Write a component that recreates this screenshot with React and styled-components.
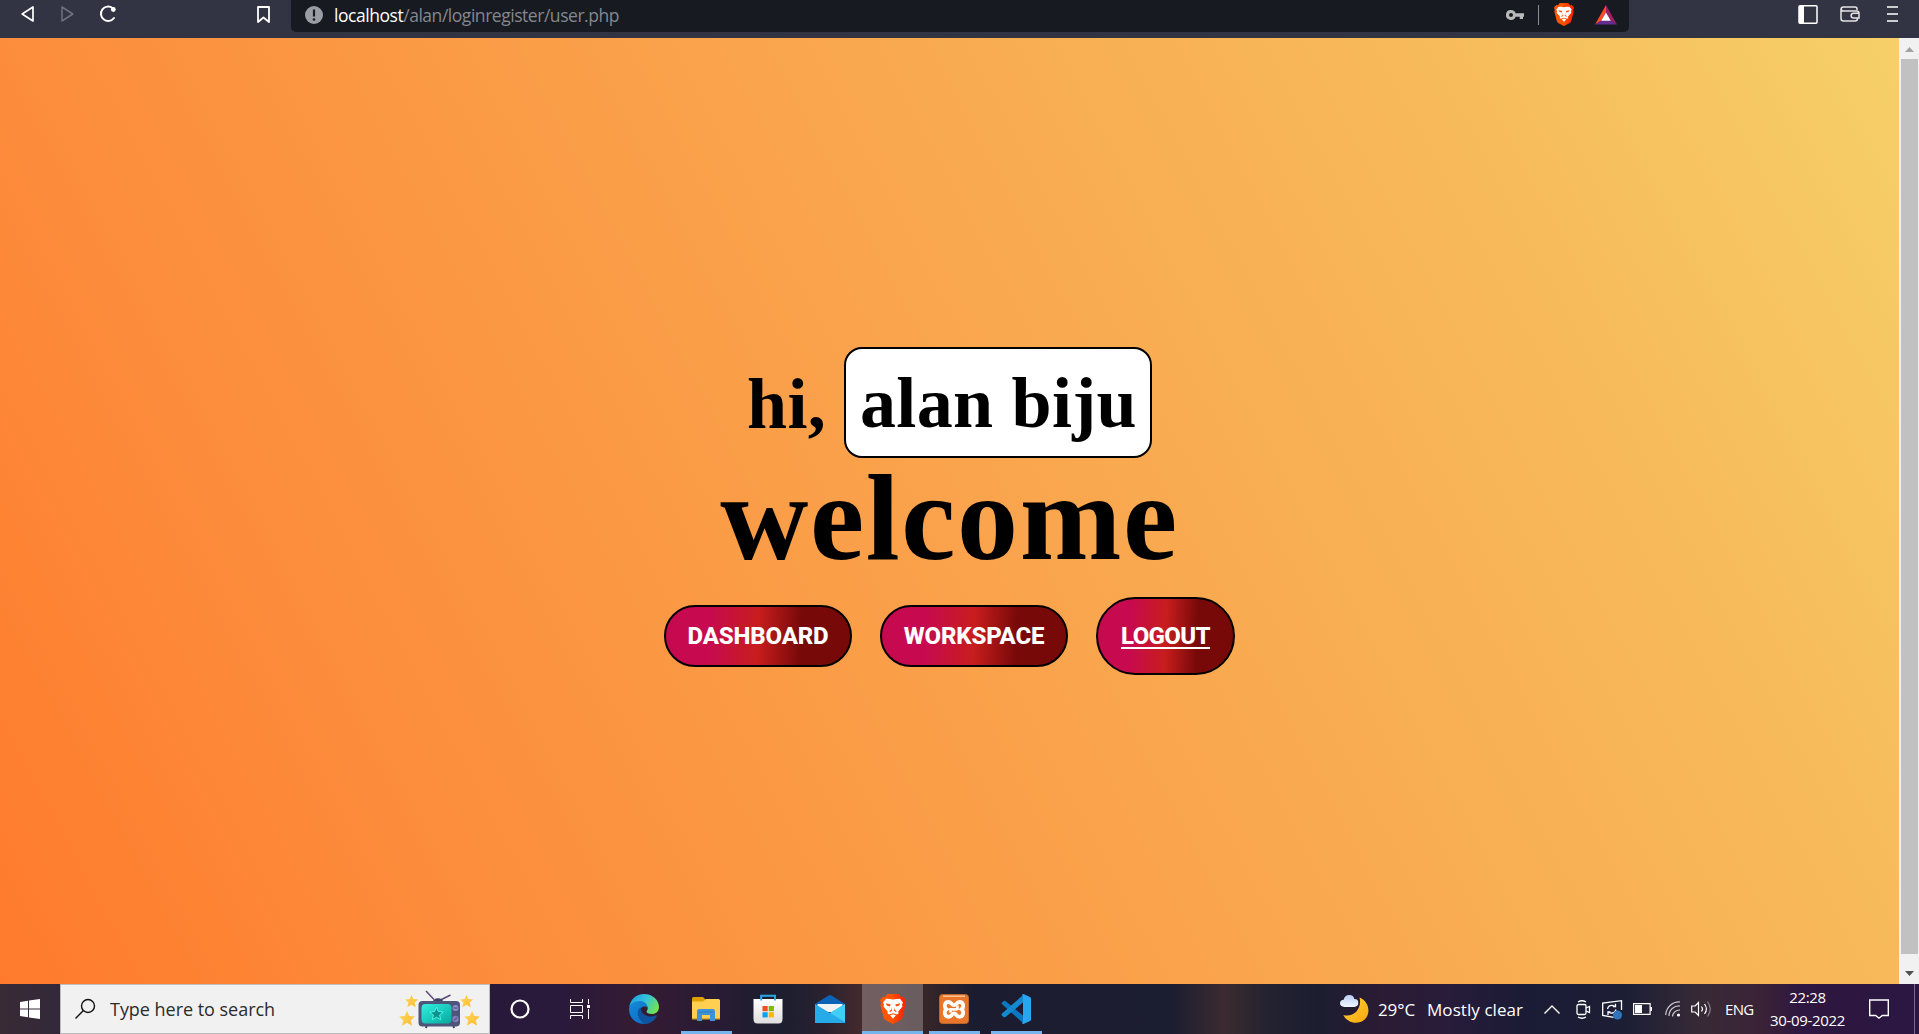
import React from "react";
import styled, { createGlobalStyle, css } from "styled-components";

const Global = createGlobalStyle`
  *, *::before, *::after { box-sizing: border-box; }
  html, body { margin: 0; padding: 0; overflow: hidden; }
  svg { display: block; flex: none; overflow: visible; }
`;

const ui = css`font-family: "Open Sans", "Noto Sans", sans-serif;`;

const Screen = styled.div`
  width: 1919px;
  height: 1034px;
  display: flex;
  flex-direction: column;
  overflow: hidden;
`;

/* ---------- browser toolbar ---------- */
const Toolbar = styled.header`
  ${ui}
  height: 38px;
  flex: none;
  display: flex;
  align-items: flex-start;
  background: #323443;
`;
const NavGroup = styled.nav`
  width: 291px;
  height: 28px;
  display: flex;
  align-items: center;
  padding-left: 21px;
`;
const NavIcon = styled.span`
  display: flex;
  margin-right: ${(p) => p.$gap || 0}px;
`;
const AddressBar = styled.div`
  width: 1338px;
  height: 32px;
  display: flex;
  align-items: center;
  padding: 0 12px 3px 14px;
  background: #171a21;
  border-radius: 0 0 5px 5px;
`;
const Url = styled.span`
  margin-left: 11px;
  font-size: 17.5px;
  line-height: 24px;
  letter-spacing: -0.46px;
  color: #85878d;
  white-space: nowrap;
`;
const Host = styled.span`color: #fff;`;
const AddressActions = styled.div`
  margin-left: auto;
  display: flex;
  align-items: center;
`;
const Separator = styled.span`
  width: 1px;
  height: 20px;
  margin: 0 15px 0 14px;
  background: #8b8c91;
`;
const ToolGroup = styled.div`
  height: 28px;
  margin-left: auto;
  padding-right: 21px;
  display: flex;
  align-items: center;
`;

/* ---------- page ---------- */
const Viewport = styled.div`
  flex: 1;
  min-height: 0;
  display: flex;
`;
const Page = styled.main`
  flex: 1;
  display: flex;
  flex-direction: column;
  align-items: center;
  padding-top: 309px;
  background: linear-gradient(62deg, #ff7a2c 0%, #fc8d3c 21%, #faa34c 50%, #f7bb5b 81%, #f6d069 100%);
  font-family: "Liberation Serif", serif;
  font-weight: 700;
  color: #000;
`;
const Greeting = styled.h3`
  margin: 0;
  display: flex;
  align-items: center;
  font-size: 72px;
  line-height: 83px;
  letter-spacing: 0.3px;
  white-space: pre;
`;
const Lead = styled.span`padding-top: 3px;`;
const Name = styled.span`
  margin-left: 18px;
  padding: 13px 13px 11px 14px;
  background: #fff;
  border: 2px solid #000;
  border-radius: 18px;
`;
const Welcome = styled.h1`
  margin: -9px 0 0;
  font-size: 122px;
  line-height: 138px;
  letter-spacing: 1.6px;
`;
const Actions = styled.div`
  margin-top: 10px;
  display: flex;
  align-items: center;
  gap: 28px;
`;
const PillButton = styled.a`
  width: ${(p) => p.$w}px;
  height: ${(p) => p.$h}px;
  display: flex;
  align-items: center;
  justify-content: center;
  border: 2px solid #000;
  border-radius: ${(p) => p.$h / 2}px;
  background: linear-gradient(92deg, #c70a4f 24%, #c81d1d 50%, #780909 73%);
  color: #fff;
  font-family: Roboto, "Liberation Sans", sans-serif;
  font-weight: 800;
  font-size: 24px;
  letter-spacing: ${(p) => (p.$underline ? -0.6 : -0.15)}px;
  text-decoration: ${(p) => (p.$underline ? "underline" : "none")};
  text-decoration-thickness: 2px;
  text-underline-offset: 3px;
`;
const Scrollbar = styled.aside`
  width: 20px;
  display: flex;
  flex-direction: column;
  align-items: center;
  background: #f1f1f1;
`;
const ScrollArrow = styled.span`
  height: ${(p) => p.$h}px;
  padding-top: ${(p) => p.$drop}px;
  display: flex;
  align-items: center;
`;
const Thumb = styled.div`
  width: 17px;
  height: 895px;
  flex: none;
  background: #c1c1c1;
`;

/* ---------- taskbar ---------- */
const Taskbar = styled.footer`
  ${ui}
  height: 50px;
  flex: none;
  display: flex;
  color: #fff;
  background: linear-gradient(90deg,
    #382b35 0, #33283a 60px, #28193a 490px, #29193a 560px, #351b33 640px, #291b34 710px,
    #1d1e2f 780px, #252030 815px, #432a2d 860px, #372629 925px, #1b1c30 975px, #1b1d31 1170px,
    #3b2b30 1225px, #222230 1270px, #1c1d30 1320px, #2c1b34 1385px, #271c3a 1450px,
    #1a1b35 1530px, #1d1f35 1630px, #372a36 1700px, #3b2337 1760px, #2e1740 1800px, #2b1742 1919px);
`;
const StartButton = styled.div`
  width: 60px;
  display: grid;
  place-items: center;
`;
const SearchBox = styled.div`
  width: 430px;
  display: flex;
  align-items: center;
  padding: 0 8px 0 14px;
  background: #f1f1f1;
  border: 1px solid #bdbdbd;
  color: #2b2b2b;
`;
const SearchLabel = styled.span`
  margin-left: 15px;
  font-size: 18px;
  letter-spacing: -0.03px;
  white-space: nowrap;
`;
const Art = styled.span`
  margin-left: auto;
  display: flex;
`;
const ShellButton = styled.div`
  width: 60px;
  margin-right: ${(p) => p.$after || 0}px;
  display: grid;
  place-items: center;
`;
const TaskButton = styled.div`
  width: ${(p) => (p.$active ? 61 : 62)}px;
  margin-left: ${(p) => (p.$active ? 1 : 0)}px;
  display: flex;
  flex-direction: column;
  align-items: center;
  justify-content: center;
  position: relative;
  background: ${(p) => (p.$active ? "rgba(255,255,255,.25)" : "none")};
  &::after {
    content: "";
    display: ${(p) => (p.$open || p.$active ? "block" : "none")};
    position: absolute;
    bottom: 0;
    left: ${(p) => (p.$active ? 0 : 6)}px;
    right: ${(p) => (p.$active ? 0 : 5)}px;
    height: 3px;
    background: #76b4ee;
  }
`;
const Tray = styled.div`
  margin-left: auto;
  display: flex;
  align-items: center;
`;
const TrayItem = styled.span`
  width: ${(p) => p.$w}px;
  display: flex;
  align-items: center;
  white-space: nowrap;
  font-size: ${(p) => p.$size || 17}px;
  letter-spacing: ${(p) => p.$track || 0}px;
`;
const Clock = styled.div`
  width: 99px;
  display: flex;
  flex-direction: column;
  align-items: center;
  padding-right: 24px;
  font-size: 15px;
  line-height: 23px;
  letter-spacing: -0.35px;
  white-space: nowrap;
`;
const DesktopEdge = styled.span`
  width: 5px;
  height: 50px;
  border-left: 1px solid #76698a;
`;

/* ---------- drawings ---------- */
const BraveIcon = ({ w, h }) => (
  <svg width={w} height={h} viewBox="0 0 26 30" preserveAspectRatio="none">
    <defs>
      <linearGradient id="brv" x1="0" x2="1"><stop offset=".4" stopColor="#ff5500" /><stop offset="1" stopColor="#ff2000" /></linearGradient>
    </defs>
    <path d="M7.5 0h11l2.500 3 2.200-.3L26 6l-1 3 .6 2-3.400 13.200-1.600 1.800L13 30l-7.600-4-1.600-1.800L.4 11 1 9 0 6l2.800-3.300L5 3z" fill="url(#brv)" />
    <path d="M6 4.800l3.500.1L13 5.600l3.500-.7 3.500-.1 3 3.800-1 2 .5 2-4.200 5 .2 2-2.600 1.600L13 24.800l-2.900-3.600-2.600-1.600.2-2-4.200-5 .5-2-1-2z" fill="#fff" />
    <path d="M5.800 9.300l5 1.200-1 1.900-3-.9zM20.200 9.300l-5 1.200 1 1.900 3-.9z" fill="#ff4a0c" />
    <path d="M10.800 12.500l.6 3-2.200 1.800 1 .6 2-1.300zM15.200 12.500l-.6 3 2.200 1.800-1 .6-2-1.300zM9 20.500l4-1.300 4 1.300-.6.900-3.400-1.100-3.400 1.100z" fill="#ff4a0c" />
  </svg>
);

const starPath = "M0-6.800L1.900-2.500 6.600-2 3.100 1 4.200 5.700 0 3.200-4.200 5.700-3.100 1-6.600-2-1.900-2.500z";

const TvArt = () => (
  <svg width="82" height="40" viewBox="399 988 82 40">
    <defs>
      <linearGradient id="scr" x1="0" y1="0" x2="1" y2="1"><stop offset="0" stopColor="#2ff0df" /><stop offset="1" stopColor="#08a79d" /></linearGradient>
      <linearGradient id="st" x1="0" y1="0" x2="1" y2="1"><stop offset="0" stopColor="#ffd95e" /><stop offset="1" stopColor="#ffb92e" /></linearGradient>
    </defs>
    <g fill="url(#st)">
      <path d={starPath} transform="translate(411.500 1000.500)" />
      <path d={starPath} transform="translate(407 1018) scale(1.2)" />
      <path d={starPath} transform="translate(466.500 1000.500)" />
      <path d={starPath} transform="translate(472 1018) scale(1.2)" />
    </g>
    <path d="M426 990l8 8.500M450.500 994l-10 5" stroke="#5a4a76" strokeWidth="1.500" />
    <path d="M433 1001c0-5 10-5 10 0z" fill="#3c4364" />
    <path d="M427 1023l-1 4M453 1023l1 4" stroke="#353c5e" strokeWidth="2" />
    <rect x="418.500" y="1000" width="41.500" height="25.500" rx="4" fill="#4e5579" />
    <rect x="421.500" y="1003" width="30" height="19.500" rx="4" fill="url(#scr)" />
    <path d={starPath} transform="translate(436.500 1013)" fill="#118f8a" stroke="#4dfff0" strokeWidth=".9" />
    <circle cx="455.500" cy="1007" r="3" fill="#8b8fc9" /><circle cx="455.500" cy="1018" r="3.200" fill="#7b80b8" />
    <path d="M453.500 1007h4M453.800 1019.500l3.400-3" stroke="#444b75" strokeWidth="1" />
  </svg>
);

const Edge = () => (
  <svg width="30" height="30" viewBox="0 0 30 30">
    <defs>
      <linearGradient id="e1" x1="0" y1=".2" x2="1" y2=".6"><stop offset="0" stopColor="#1e9fe0" /><stop offset=".5" stopColor="#33c1dc" /><stop offset="1" stopColor="#73e34e" /></linearGradient>
      <linearGradient id="e2" x1="0" y1="0" x2=".6" y2="1"><stop offset="0" stopColor="#1689d6" /><stop offset="1" stopColor="#0c71c9" /></linearGradient>
    </defs>
    <path d="M.4 12.500C1.500 5 7.500 0 15 0c9 0 15 6.500 15 13 0 4.500-3.300 7-7.200 7-3.300 0-5.300-1.200-5.300-2.400 0-.8 1.200-1.400 1.200-3.400C18.700 11 15.500 8.300 11.500 8.300 6 8.300 2 11 .4 12.500z" fill="url(#e1)" />
    <path d="M.3 12.500C2 9.200 6.500 7 11 7c4.500 0 7.700 3.300 7.700 7.200-1.200-2.700-6.700-2.700-8.200 2.100C9.200 21 12 27.500 18 29.500 8 31.500 0 24.500 0 15z" fill="url(#e2)" />
    <path d="M11.700 13.300C6 17.500 9 26.500 16 29.800c5.500.2 9.600-3.300 11.600-7.300.5-1-.2-1.500-1.100-1-6 2.700-13.500-.5-14.300-5.300-.2-1 0-2-.5-2.900z" fill="#0e539e" />
  </svg>
);

const Folder = () => (
  <svg width="28" height="24" viewBox="0 0 28 24">
    <path d="M0 1.500Q0 0 1.500 0H11l2.500 2.500V6H0z" fill="#dda000" />
    <path d="M0 4.500h11L14 2h12.500Q28 2 28 3.500V22H0z" fill="#ffcf51" />
    <path d="M0 21h28v1.500H0z" fill="#e0a52b" />
    <path d="M5 24V14q0-2 2-2h14q2 0 2 2v10h-5v-6h-8v6z" fill="#3d93d9" />
    <path d="M6.500 15h15" stroke="#3487cc" strokeWidth="2" />
  </svg>
);

const Store = () => (
  <svg width="30" height="30" viewBox="0 0 30 30">
    <defs><linearGradient id="sg" x1="0" y1="0" x2="0" y2="1"><stop offset="0" stopColor="#fff" /><stop offset="1" stopColor="#dedede" /></linearGradient></defs>
    <path d="M8.200 6V1.800H22V6" fill="none" stroke="#26a6e3" strokeWidth="2" />
    <path d="M.5 5H29.500V25q0 4.500-4 4.500H4.500q-4 0-4-4.500z" fill="url(#sg)" />
    <path d="M9.500 12h5.200v5.200H9.500z" fill="#f04f24" /><path d="M15.700 12h5.200v5.200h-5.200z" fill="#7db900" />
    <path d="M9.500 18.200h5.200v5.200H9.500z" fill="#02a2ef" /><path d="M15.700 18.200h5.200v5.200h-5.200z" fill="#ffb800" />
    <path d="M8.200 6.500V2M22 6.500V2" stroke="#26a6e3" strokeWidth="1.800" />
  </svg>
);

const Mail = () => (
  <svg width="30" height="28" viewBox="0 0 30 28">
    <path d="M0 9L13.500.4Q15-.4 16.500.4L30 9v3H0z" fill="#0c62b4" />
    <path d="M2.500 9h25v8h-25z" fill="#f2f2f2" />
    <path d="M0 9l15 9L30 9v19H0z" fill="#27aae8" />
    <path d="M30 9v18L15 18z" fill="#40cdf6" />
  </svg>
);

const Xampp = () => (
  <svg width="30" height="30" viewBox="0 0 30 30">
    <rect x=".5" y=".5" width="29" height="29" rx="3" fill="#e9762a" stroke="#b9672d" />
    <path d="M4 2.200h22" stroke="#ffc396" strokeWidth="1.500" />
    <path d="M9.500 8c3.500 0 3 3.200 5.500 3.200S17 8 20.500 8c4 0 4.800 5 2 7.200 2.800 2.200 2 7.600-2 7.600-3.500 0-3-3.400-5.500-3.400s-2 3.400-5.500 3.400c-4 0-4.800-5.400-2-7.600C4.700 13 5.500 8 9.500 8z" fill="none" stroke="#fff" strokeWidth="3.800" />
    <path d="M11.500 14v4.500M18.500 11.500v4.500" stroke="#fff" strokeWidth="2.600" />
    <path d="M11.500 15.400h7" stroke="#fff" strokeWidth="2.600" />
  </svg>
);

const Code = () => (
  <svg width="30" height="30" viewBox="0 0 30 30">
    <path d="M1 8.200l2-1.300q.8-.4 1.500.2L22 21.500V29L1 10.300q-.9-1 0-2.100z" fill="#0b77bf" />
    <path d="M1 21.700l2 1.500q.8.400 1.500-.2L22 8.500V1L1 19.500q-.9 1.100 0 2.200z" fill="#1389d0" />
    <path d="M21 .7q.8-.9 2-.5l6 2.800q1 .5 1 1.500v21q0 1-1 1.500l-6 2.800q-1.200.4-2-.5l1-1.300V2z" fill="#27a7f2" />
  </svg>
);

const Weather = () => (
  <svg width="28" height="28" viewBox="0 0 28 28">
    <defs>
      <linearGradient id="mn" x1="0" y1="0" x2="1" y2="1"><stop offset="0" stopColor="#ffd33b" /><stop offset="1" stopColor="#f9a50b" /></linearGradient>
      <linearGradient id="cl" x1="0" y1="0" x2="0" y2="1"><stop offset="0" stopColor="#b9cdf2" /><stop offset="1" stopColor="#f1f6ff" /></linearGradient>
    </defs>
    <path d="M19.500 2.500C31 7 31.500 23 20.500 27 13 29.500 6 25.500 3.300 20 13 23 22.500 14 19.500 2.500z" fill="url(#mn)" />
    <path d="M4.500 12Q0 11.500 0 8.300 0 5 3.700 4.700 5-.3 9.500.1q4 .2 4.800 4 4-.2 4 3.700T14 12z" fill="url(#cl)" />
  </svg>
);

const Stroke = ({ w, h, sw = 1.3, c = "#fff", children }) => (
  <svg width={w} height={h} viewBox={`0 0 ${w} ${h}`} fill="none" stroke={c} strokeWidth={sw}>{children}</svg>
);

export default function App() {
  return (
    <Screen>
      <Global />
      <Toolbar>
        <NavGroup>
          <NavIcon $gap={27}><Stroke w={13} h={16} sw={1.700}><path d="M12 1v14L1.200 8z" strokeLinejoin="round" /></Stroke></NavIcon>
          <NavIcon $gap={25}><Stroke w={13} h={16} sw={1.500} c="#6f717c"><path d="M1 1v14L11.800 8z" strokeLinejoin="round" /></Stroke></NavIcon>
          <NavIcon $gap={140}>
            <Stroke w={18} h={18} sw={2}><path d="M13.500 3A7.200 7.200 0 1 0 15 13" strokeLinecap="round" /><circle cx="14.300" cy="4.500" r="2.400" fill="#fff" stroke="none" /></Stroke>
          </NavIcon>
          <NavIcon><Stroke w={13} h={17} sw={1.800}><path d="M1 1h11v15l-5.500-4.500L1 16z" strokeLinejoin="round" /></Stroke></NavIcon>
        </NavGroup>
        <AddressBar>
          <svg width="18" height="18" viewBox="0 0 18 18"><circle cx="9" cy="9" r="9" fill="#9b9da5" /><path d="M9 3.500v7" stroke="#171a21" strokeWidth="2.200" /><circle cx="9" cy="13.500" r="1.300" fill="#171a21" /></svg>
          <Url><Host>localhost</Host>/alan/loginregister/user.php</Url>
          <AddressActions>
            <svg width="18" height="10" viewBox="0 0 18 10"><path fillRule="evenodd" d="M5 0a5 5 0 0 1 4.600 3.200H18v3.600h-1V9h-3.300V6.800H9.600A5 5 0 1 1 5 0zm0 3a2 2 0 1 0 0 4 2 2 0 0 0 0-4z" fill="#b9b9ba" /></svg>
            <Separator />
            <BraveIcon w={20} h={23} />
            <svg width="43" height="20" viewBox="-21 0 43 20">
              <path d="M11 0L0 19.500 6.500 15.500 11 7.500z" fill="#ff4a24" /><path d="M11 0l11 19.500-6.500-4L11 7.500z" fill="#9e1f63" /><path d="M0 19.500h22l-6.500-4h-9z" fill="#662d91" /><path d="M11 7.500l4.800 8.300H6.200z" fill="#fff" />
            </svg>
          </AddressActions>
        </AddressBar>
        <ToolGroup>
          <NavIcon $gap={22}><Stroke w={20} h={19} sw={1.500}><rect x="1" y=".8" width="18" height="17.400" rx="1" /><path d="M1 1h5v17H1z" fill="#fff" stroke="none" /></Stroke></NavIcon>
          <NavIcon $gap={27}><Stroke w={20} h={16} sw={1.500} c="#e4e4e7"><path d="M17 4V3q0-2-2-2H3.500Q1 1 1 3.500v9Q1 15 3.500 15H15q2.500 0 2.500-2.500M1.200 3.500Q1.500 5 4 5h12.500q2.500 0 2.500 2.500V12h-5.500a2.300 2.300 0 0 1 0-4.800H19" /></Stroke></NavIcon>
          <NavIcon><Stroke w={11} h={16} sw={1.600}><path d="M0 1h11M0 8h11M0 15h11" /></Stroke></NavIcon>
        </ToolGroup>
      </Toolbar>

      <Viewport>
        <Page>
          <Greeting><Lead>hi,</Lead><Name>alan biju</Name></Greeting>
          <Welcome>welcome</Welcome>
          <Actions>
            <PillButton $w={188} $h={62}>DASHBOARD</PillButton>
            <PillButton $w={188} $h={62}>WORKSPACE</PillButton>
            <PillButton $w={139} $h={78} $underline>LOGOUT</PillButton>
          </Actions>
        </Page>
        <Scrollbar>
          <ScrollArrow $h={21} $drop={2}><svg width="9" height="5"><path d="M0 5L4.500 0 9 5z" fill="#a3a3a3" /></svg></ScrollArrow>
          <Thumb />
          <ScrollArrow $h={30} $drop={8}><svg width="9" height="5"><path d="M0 0l4.500 5L9 0z" fill="#505050" /></svg></ScrollArrow>
        </Scrollbar>
      </Viewport>

      <Taskbar>
        <StartButton>
          <svg width="20" height="20" viewBox="0 0 20 20" fill="#fff"><path d="M0 2.900l8-1.200v7.800H0zM9 1.500L20 0v9.500H9zM0 10.500h8v7.800l-8-1.200zM9 10.500h11V20L9 18.500z" /></svg>
        </StartButton>
        <SearchBox>
          <Stroke w={20} h={20} c="#111" sw={1.400}><circle cx="13" cy="7" r="6.500" /><path d="M8.400 11.600L.5 19.500" /></Stroke>
          <SearchLabel>Type here to search</SearchLabel>
          <Art><TvArt /></Art>
        </SearchBox>
        <ShellButton><Stroke w={20} h={20} sw={2.200}><circle cx="10" cy="10" r="8.500" /></Stroke></ShellButton>
        <ShellButton $after={3}>
          <Stroke w={20} h={20} sw={1}><path d="M.5 0v3.500h12V0M.5 20v-3.500h12V20M.5 6.500h12v7H.500zM18.500 0v5M18.500 10v10" /><path d="M17 6h3v3h-3z" fill="#fff" stroke="none" /></Stroke>
        </ShellButton>
        <TaskButton><Edge /></TaskButton>
        <TaskButton $open><Folder /></TaskButton>
        <TaskButton><Store /></TaskButton>
        <TaskButton><Mail /></TaskButton>
        <TaskButton $active><BraveIcon w={26} h={30} /></TaskButton>
        <TaskButton $open><Xampp /></TaskButton>
        <TaskButton $open><Code /></TaskButton>
        <Tray>
          <TrayItem $w={38}><Weather /></TrayItem>
          <TrayItem $w={49} $size={17} $track={-0.1}>29°C</TrayItem>
          <TrayItem $w={117} $size={17} $track={0.07}>Mostly clear</TrayItem>
          <TrayItem $w={32}><Stroke w={16} h={9} sw={1.400}><path d="M.5 8.500L8 1l7.500 7.500" /></Stroke></TrayItem>
          <TrayItem $w={26}><Stroke w={14} h={19} sw={1.300}><rect x="1" y="4.500" width="9" height="10" rx="1.500" /><path d="M10 8l3.500-1.500v6L10 11M2 2q4-2.500 8 0M2 17q4 2.500 8 0" /></Stroke></TrayItem>
          <TrayItem $w={31}>
            <Stroke w={20} h={19} sw={1.300}><path d="M19.500 10V.700L.700 3v12.500l11 1.800M5.500 9q1-4 5-3.500l3 1V3.800M13.500 6.500H11M14 9.500q-1 4-5 3.500l-3-1V15M6 12h2.500" /><circle cx="15.500" cy="15" r="4.500" fill="#2e75bd" stroke="none" /></Stroke>
          </TrayItem>
          <TrayItem $w={32}><Stroke w={19} h={12} sw={1.200}><path d="M.6.600h16.500v10.800H.600zM18.400 4v4" /><path d="M2 2h7v8H2z" fill="#fff" stroke="none" /></Stroke></TrayItem>
          <TrayItem $w={26}><Stroke w={16} h={16} sw={1.200} c="#c9c5ca"><path d="M.7 14A13.500 13.500 0 0 1 15 1M4 15A10 10 0 0 1 15 5M7.500 15.500A7 7 0 0 1 15 9" /><circle cx="13.500" cy="14" r="1.600" fill="#fff" stroke="none" /></Stroke></TrayItem>
          <TrayItem $w={34}><Stroke w={21} h={18} sw={1.200}><path d="M.7 6h3.500L7.500 2.500v13L4.200 12H.700zM10.500 6.500q2 2.500 0 5M13.500 4q3.800 5 0 10" /><path d="M16.500 1.500q5.500 7.500 0 15" stroke="#89818d" /></Stroke></TrayItem>
          <TrayItem $w={45} $size={15} $track={-0.7}>ENG</TrayItem>
          <Clock><span>22:28</span><span>30-09-2022</span></Clock>
          <TrayItem $w={45}><Stroke w={20} h={20} sw={1.400}><path d="M.7 1h18.600v15.500h-6L10 19.200l-3.300-2.700h-6z" /></Stroke></TrayItem>
          <DesktopEdge />
        </Tray>
      </Taskbar>
    </Screen>
  );
}
